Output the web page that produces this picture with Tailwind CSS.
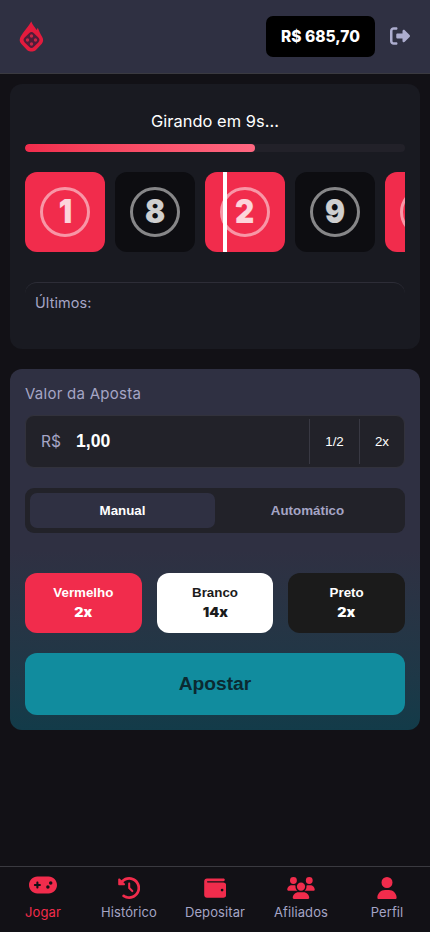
<!DOCTYPE html>
<html lang="pt-BR">
<head>
<meta charset="utf-8">
<meta name="viewport" content="width=device-width, initial-scale=1">
<title>Double</title>
<script src="https://cdn.jsdelivr.net/npm/@tailwindcss/browser@4"></script>
</head>
<body class="flex h-[932px] w-[430px] flex-col overflow-hidden bg-[#121116] font-['Inter',sans-serif] text-white">
<header class="flex h-[74px] shrink-0 items-center justify-between border-b border-[#3a3a40] bg-[#2f3042] pr-[19px] pl-[19px]">
  <svg class="h-[31px] w-[25px]" viewBox="0 0 25 31">
    <path fill="#e31b3d" d="M12.300.500c1.400 3.600 3.400 5.500 5.200 8.400.700-1 1-1.600 1.300-2.200 1.200 3.200 2.400 5.900 4.300 9q2.200 4-.300 7l-5.600 6c-1.100 1.200-2.200 1.700-3.700 1.700h-2c-1.500 0-2.600-.500-3.700-1.700L2.200 22.700C.200 20.600.400 17.900 1.700 15.500 4.500 10.300 9.500 5.800 12.300.500z"/>
    <rect x="6" y="12.500" width="13" height="13" rx="3.400" transform="rotate(45 12.500 19)" fill="#4f1d39"/>
    <g fill="#c62645"><circle cx="12.500" cy="15" r="1.700"/><circle cx="8.500" cy="19" r="1.700"/><circle cx="16.500" cy="19" r="1.700"/><circle cx="12.500" cy="23" r="1.700"/></g>
  </svg>
  <div class="flex items-center gap-[15px]">
    <div class="flex h-[41px] w-[109px] items-center justify-center rounded-[7px] bg-black text-[15.5px] font-extrabold whitespace-nowrap">R$ 685,70</div>
    <svg class="mr-[1px] mb-[1px] h-5 w-5" viewBox="0 0 512 512" fill="#adadcf"><path d="M377.9 105.9L500.7 228.7c7.200 7.200 11.300 17.100 11.300 27.300s-4.100 20.100-11.300 27.300L377.900 406.100c-6.400 6.400-15 9.900-24 9.900c-18.700 0-33.900-15.200-33.900-33.900l0-62.100-128 0c-17.700 0-32-14.300-32-32l0-64c0-17.700 14.300-32 32-32l128 0 0-62.100c0-18.700 15.200-33.900 33.900-33.900c9 0 17.600 3.600 24 9.900zM160 96L96 96c-17.700 0-32 14.300-32 32l0 256c0 17.700 14.300 32 32 32l64 0c17.700 0 32 14.300 32 32s-14.300 32-32 32l-64 0c-53 0-96-43-96-96L0 128C0 75 43 32 96 32l64 0c17.700 0 32 14.300 32 32s-14.300 32-32 32z"/></svg>
  </div>
</header>

<main class="flex flex-1 flex-col gap-5 px-2.5 pt-2.5">
  <section class="h-[265px] rounded-[12px] bg-[#191a21] px-[15px] pt-[25px]">
    <p class="h-6 text-center text-[16.4px] leading-6 tracking-[0.04px]">Girando em 9s...</p>
    <div class="mt-[11px] h-2 overflow-hidden rounded-[4px] bg-[#222129]"><div class="h-2 rounded-[4px] bg-gradient-to-r from-[#f12c4c] to-[#ff6781]" style="width:60.5%"></div></div>
    <div class="relative mt-5 overflow-hidden">
      <div class="flex gap-2.5">
        <div class="flex size-20 shrink-0 items-center justify-center rounded-[12px] bg-[#f12c4c]"><span class="flex size-[50px] items-center justify-center rounded-full border-3 border-white/50 text-[33px] font-extrabold text-white/80"><b class="scale-x-90">1</b></span></div>
        <div class="flex size-20 shrink-0 items-center justify-center rounded-[12px] bg-[#0d0d11]"><span class="flex size-[50px] items-center justify-center rounded-full border-3 border-white/50 text-[33px] font-extrabold text-white/80"><b class="scale-x-90">8</b></span></div>
        <div class="flex size-20 shrink-0 items-center justify-center rounded-[12px] bg-[#f12c4c]"><span class="flex size-[50px] items-center justify-center rounded-full border-3 border-white/50 text-[33px] font-extrabold text-white/80"><b class="scale-x-90">2</b></span></div>
        <div class="flex size-20 shrink-0 items-center justify-center rounded-[12px] bg-[#0d0d11]"><span class="flex size-[50px] items-center justify-center rounded-full border-3 border-white/50 text-[33px] font-extrabold text-white/80"><b class="scale-x-90">9</b></span></div>
        <div class="flex size-20 shrink-0 items-center justify-center rounded-[12px] bg-[#f12c4c]"><span class="flex size-[50px] rounded-full border-3 border-white/50"></span></div>
      </div>
      <div class="absolute top-0 left-[198px] h-20 w-1 bg-white"></div>
    </div>
    <div class="mt-[30px] h-[52px] rounded-[12px] border-t border-[#2d2d37] px-2.5 pt-[9px] text-[14.4px] leading-[22px] tracking-[0.12px] text-[#a5a5c5]">Últimos:</div>
  </section>

  <section class="h-[361px] rounded-[12px] bg-linear-to-b from-[#2f3042] from-50% to-[#123b49] px-[15px] pt-[14px]">
    <p class="h-[22px] text-[15px] leading-[22px] tracking-[0.26px] text-[#a5a5c5]">Valor da Aposta</p>
    <div class="mt-[10px] flex h-[53px] items-center rounded-[9px] border border-[#32323c] bg-[#222229] pl-[15px]">
      <span class="w-[35px] text-[15.5px] text-[#a5a5c5]">R$</span>
      <span class="flex-1 font-['Liberation_Sans',sans-serif] text-[17.6px] font-bold">1,00</span>
      <span class="flex h-[45px] w-[50px] items-center justify-center border-l border-[#393943] font-['Liberation_Sans',sans-serif] text-[13.333px]">1/2</span>
      <span class="flex h-[45px] w-[45px] items-center justify-center border-l border-[#393943] font-['Liberation_Sans',sans-serif] text-[13.333px]">2x</span>
    </div>
    <div class="mt-5 flex h-[45px] rounded-[9px] bg-[#222229] p-[5px] font-['Liberation_Sans',sans-serif] text-[13.333px] font-bold">
      <div class="flex flex-1 items-center justify-center rounded-[7px] bg-[#2f3042]">Manual</div>
      <div class="flex flex-1 items-center justify-center text-[#a5a5c5]">Automático</div>
    </div>
    <div class="mt-10 grid grid-cols-3 gap-[15px] font-['Liberation_Sans',sans-serif] text-[13.333px] leading-[20px] font-bold">
      <div class="flex h-[60px] flex-col items-center justify-center rounded-[12px] bg-[#f12c4c]"><span>Vermelho</span><span class="-mt-[1px] mb-[1px] scale-x-110 font-['Inter'] text-[13px] font-black">2x</span></div>
      <div class="flex h-[60px] flex-col items-center justify-center rounded-[12px] bg-white text-[#1b1b1b]"><span>Branco</span><span class="-mt-[1px] mb-[1px] scale-x-110 font-['Inter'] text-[13px] font-black">14x</span></div>
      <div class="flex h-[60px] flex-col items-center justify-center rounded-[12px] bg-[#1b1b1b]"><span>Preto</span><span class="-mt-[1px] mb-[1px] scale-x-110 font-['Inter'] text-[13px] font-black">2x</span></div>
    </div>
    <div class="mt-5 flex h-[62px] items-center justify-center rounded-[12px] bg-[#118c9e] font-['Liberation_Sans',sans-serif] text-[19.2px] font-bold text-[#0b2a31]">Apostar</div>
  </section>
</main>

<nav class="grid h-[66px] shrink-0 grid-cols-5 border-t border-[#3a3a40] bg-[#121116] pt-[9px] text-center text-[13px] leading-[19px] tracking-[0.1px] text-[#a5a5c5]">
  <div class="flex flex-col items-center gap-[7px] text-[#f12c4c]"><svg class="h-[18px] w-[28px]" viewBox="0 64 640 384" fill="#f12c4c"><path d="M192 64C86 64 0 150 0 256S86 448 192 448H448c106 0 192-86 192-192s-86-192-192-192H192zM496 168a40 40 0 1 1 0 80 40 40 0 1 1 0-80zM392 304a40 40 0 1 1 80 0 40 40 0 1 1 -80 0zM168 200c0-13.300 10.700-24 24-24s24 10.700 24 24v32h32c13.300 0 24 10.700 24 24s-10.700 24-24 24H216v32c0 13.300-10.700 24-24 24s-24-10.700-24-24V280H136c-13.300 0-24-10.700-24-24s10.700-24 24-24h32V200z"/></svg><span class="pt-[2px]">Jogar</span></div>
  <div class="flex flex-col items-center gap-[4px]"><svg class="mt-[1px] h-[22px] w-[22.400px]" viewBox="0 0 512 512" fill="#f12c4c"><path d="M75 75L41 41C25.900 25.900 0 36.600 0 57.900V168c0 13.300 10.700 24 24 24H134.100c21.400 0 32.100-25.900 17-41l-30.800-30.800C155 85.500 203 64 256 64c106 0 192 86 192 192s-86 192-192 192c-40.800 0-78.600-12.700-109.700-34.400c-14.500-10.100-34.400-6.600-44.600 7.900s-6.600 34.400 7.900 44.600C151.200 495 201.700 512 256 512c141.400 0 256-114.600 256-256S397.400 0 256 0C185.300 0 121.300 28.700 75 75zm181 53c-13.300 0-24 10.700-24 24V256c0 6.400 2.500 12.500 7 17l72 72c9.400 9.400 24.600 9.400 33.900 0s9.400-24.600 0-33.900l-65-65V152c0-13.300-10.700-24-24-24z"/></svg><span>Histórico</span></div>
  <div class="flex flex-col items-center gap-[4px]"><svg class="mt-[1px] h-[22px] w-[22.400px]" viewBox="0 0 512 512" fill="#f12c4c"><path d="M64 32C28.700 32 0 60.700 0 96V416c0 35.300 28.700 64 64 64H448c35.300 0 64-28.700 64-64V192c0-35.300-28.700-64-64-64H80c-8.800 0-16-7.200-16-16s7.200-16 16-16H448c17.700 0 32-14.300 32-32s-14.300-32-32-32H64zM416 272a32 32 0 1 1 0 64 32 32 0 1 1 0-64z"/></svg><span>Depositar</span></div>
  <div class="flex flex-col items-center gap-[4px]"><svg class="mt-[1px] h-[22px] w-[28px]" viewBox="0 0 640 512" fill="#f12c4c"><path d="M144 0a80 80 0 1 1 0 160A80 80 0 1 1 144 0zM512 0a80 80 0 1 1 0 160A80 80 0 1 1 512 0zM0 298.700C0 239.800 47.800 192 106.700 192h42.700c15.900 0 31 3.500 44.600 9.700c-1.300 7.200-1.900 14.700-1.900 22.300c0 38.200 16.800 72.500 43.300 96c-.2 0-.4 0-.7 0H21.300C9.600 320 0 310.400 0 298.700zM405.300 320c-.2 0-.4 0-.7 0c26.600-23.500 43.300-57.800 43.300-96c0-7.600-.7-15-1.900-22.300c13.600-6.300 28.700-9.700 44.600-9.700h42.700C592.200 192 640 239.800 640 298.700c0 11.800-9.600 21.300-21.300 21.300H405.300zM224 224a96 96 0 1 1 192 0 96 96 0 1 1 -192 0zM128 485.300C128 411.700 187.700 352 261.300 352H378.700C452.300 352 512 411.700 512 485.300c0 14.700-11.900 26.700-26.700 26.700H154.700c-14.700 0-26.700-11.900-26.700-26.700z"/></svg><span>Afiliados</span></div>
  <div class="flex flex-col items-center gap-[4px]"><svg class="mt-[1px] h-[22px] w-[20px]" viewBox="0 0 448 512" fill="#f12c4c"><path d="M224 256A128 128 0 1 0 224 0a128 128 0 1 0 0 256zm-45.700 48C79.800 304 0 383.800 0 482.300C0 498.700 13.300 512 29.700 512H418.300c16.400 0 29.700-13.300 29.700-29.700C448 383.800 368.200 304 269.700 304H178.300z"/></svg><span>Perfil</span></div>
</nav>
</body>
</html>
